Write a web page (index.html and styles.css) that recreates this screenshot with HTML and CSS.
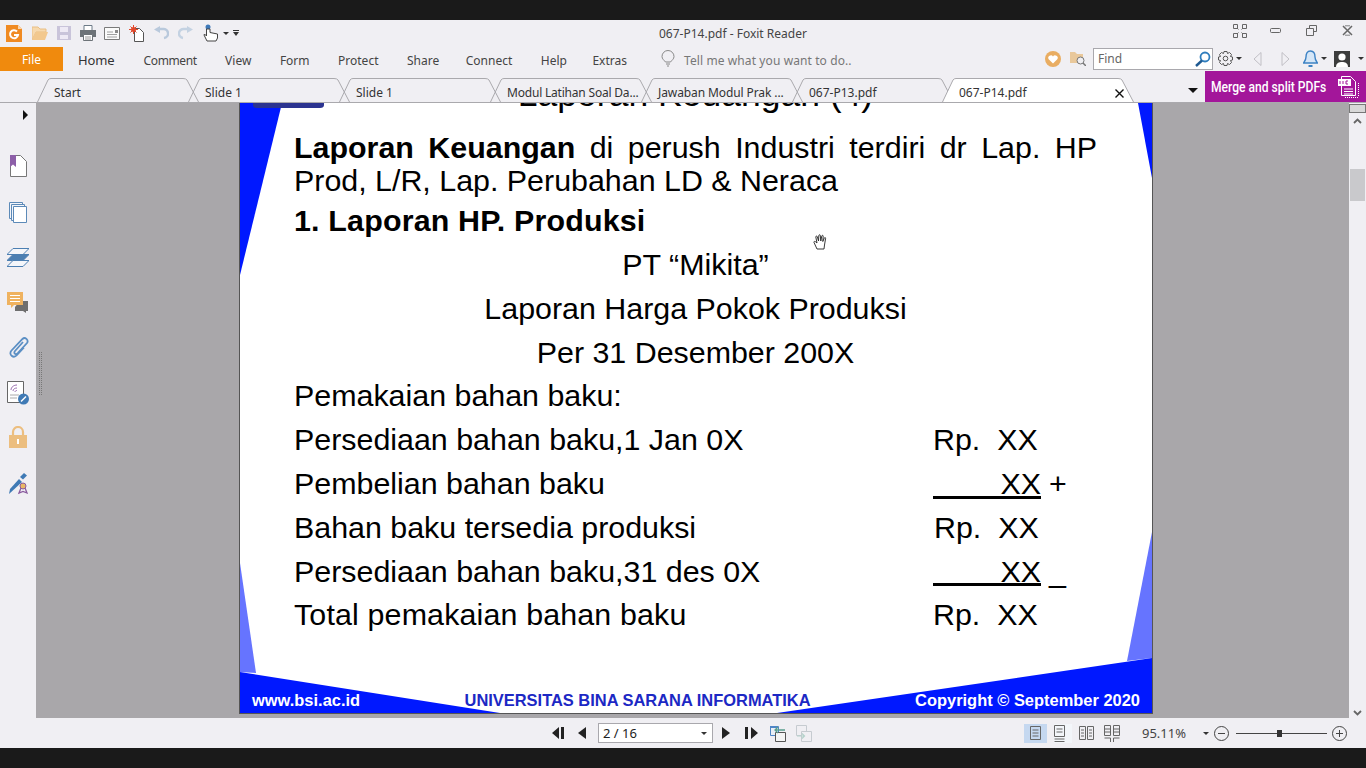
FILE: index.html
```html
<!DOCTYPE html>
<html>
<head>
  <title>067-P14.pdf - Foxit Reader</title>
  <link rel="stylesheet" href="styles.css">
</head>
<body>
<div class="app">

  <!-- quick access + title + window buttons -->
  <div class="titlebar">
    <div class="qa">
      <svg width="16" height="17" viewBox="0 0 16 17"><path d="M0 0h12l4 4v13H0z" fill="#f08a22"/><path d="M12 0l4 4h-4z" fill="#fbd7ae"/><path d="M11 6.500A4 4 0 1 0 12 10H8" fill="none" stroke="#fff" stroke-width="2"/></svg>
      <svg class="ml10" width="16" height="15" viewBox="0 0 16 15"><path d="M0 1h6l2 2h6v3H4L0 14z" fill="#f7d9ad" stroke="#e9bf85"/><path d="M4 6h12l-3 8H0z" fill="#f2c88e"/></svg>
      <svg class="ml9" width="14" height="14" viewBox="0 0 14 14"><path d="M0 0h14v14H0z" fill="#c9c4da"/><path d="M3 1h8v5H3z" fill="#eeeaf5"/><path d="M3 9h8v4H3z" fill="#eeeaf5"/></svg>
      <svg class="ml9" width="16" height="16" viewBox="0 0 16 16"><path d="M4 .5h8v5H4z" fill="#fff" stroke="#6d7b88"/><path d="M0 5h16v7H0z" fill="#6d7378"/><path d="M3.500 9.500h9v6h-9z" fill="#fff" stroke="#6d7378"/><path d="M5 12h6M5 14h6" stroke="#999"/></svg>
      <svg class="ml8" width="16" height="13" viewBox="0 0 16 13"><path d="M.5.5h15v12H.5z" fill="#fbfbfb" stroke="#7a7a7a"/><path d="M11 3h3v3h-3z" fill="#8a8a8a"/><path d="M3 5h6M3 7.500h10M3 10h10" stroke="#a0a0a0"/></svg>
      <svg class="ml9" width="15" height="17" viewBox="0 0 15 17"><path d="M5.500 3.500h5l4 4v9h-9z" fill="#fff" stroke="#555"/><circle cx="4.500" cy="4.500" r="2.500" fill="#e2472a"/><path d="M4.500 0v9M0 4.500h9M1.500 1.500l6 6M7.500 1.500l-6 6" stroke="#e2472a"/></svg>
      <svg class="ml10" width="15" height="15" viewBox="0 0 15 15"><path d="M5 3h4a4.500 4.500 0 0 1 1 9" fill="none" stroke="#b9c9dc" stroke-width="2.400"/><path d="M6 0v7L0 3.500z" fill="#b9c9dc"/></svg>
      <svg class="ml9" width="15" height="15" viewBox="0 0 15 15"><path d="M10 3H6a4.500 4.500 0 0 0-1 9" fill="none" stroke="#c4d2e2" stroke-width="2.400"/><path d="M9 0v7l6-3.500z" fill="#c4d2e2"/></svg>
      <svg class="ml10" width="16" height="18" viewBox="0 0 16 18"><circle cx="5" cy="3" r="2.500" fill="#3d78b8"/><path d="M3.500 5v7L1.500 10 1 11l3 6h9l1.500-3v-4L7 8.500V5z" fill="#fff" stroke="#444"/></svg>
      <i class="caret ml4"></i>
      <svg class="ml4" width="6" height="6" viewBox="0 0 6 6"><path d="M0 .5h6" stroke="#333"/><path d="M0 2h6L3 6z" fill="#333"/></svg>
    </div>
    <div class="doc-title">067-P14.pdf - Foxit Reader</div>
    <div class="win">
      <svg width="14" height="14" viewBox="0 0 14 14" fill="none" stroke="#666"><path d="M.5.500h4v4h-4zM9.500.5h4v4h-4zM.5 9.500h4v4h-4zM9.500 9.500h4v4h-4zM4 4l1.500 1.500M10 4L8.500 5.500M4 10l1.500-1.500M10 10L8.500 8.500"/></svg>
      <svg class="w-min" width="11" height="6" viewBox="0 0 11 6" fill="none" stroke="#666"><rect x=".5" y=".5" width="10" height="4" rx="1"/></svg>
      <svg class="w-gap" width="11" height="11" viewBox="0 0 11 11" fill="#f0eff3" stroke="#666"><path d="M3.500.5h7v6h-7z"/><path d="M.5 3.500h7v7h-7z"/></svg>
      <svg class="w-gap" width="11" height="11" viewBox="0 0 11 11" fill="none" stroke="#666" stroke-width="1.500"><path d="M1 1l9 9M10 1l-9 9"/><path d="M3 .8h5M3 10.200h5" stroke-width=".8"/></svg>
    </div>
  </div>

  <!-- ribbon menu -->
  <div class="ribbon">
    <div class="file-btn">File</div>
    <span class="menu-home">Home</span>
    <nav class="menu">
      <span class="m-comment">Comment</span><span>View</span><span>Form</span><span>Protect</span><span>Share</span><span class="m-connect">Connect</span><span>Help</span><span class="m-extras">Extras</span>
    </nav>
    <svg class="bulb" width="14" height="17" viewBox="0 0 14 17" fill="none" stroke="#888"><path d="M4.500 12C3 10 1 9 1 6.500a6 6 0 0 1 12 0C13 9 11 10 9.500 12z"/><path d="M5 14h4M6 16h2"/></svg>
    <span class="tell">Tell me what you want to do..</span>
    <div class="ribbon-right">
      <svg width="16" height="16" viewBox="0 0 16 16"><circle cx="8" cy="8" r="8" fill="#e9ad62"/><path d="M8 12.500L3.700 8.200a2.400 2.400 0 0 1 4.300-2.700 2.400 2.400 0 0 1 4.300 2.700z" fill="#fff"/></svg>
      <svg class="ml9" width="16" height="15" viewBox="0 0 16 15"><path d="M0 1h5l2 2h6v9H0z" fill="#e9c89b"/><circle cx="10.500" cy="9.500" r="3.500" fill="#f0eff3" stroke="#777"/><path d="M13 12l3 3" stroke="#777" stroke-width="1.500"/></svg>
      <div class="find"><span>Find</span>
        <svg width="16" height="16" viewBox="0 0 16 16" fill="none"><circle cx="10" cy="6" r="4.500" stroke="#2f7dbd" stroke-width="1.800"/><path d="M7 9.500L1 15" stroke="#1f5a92" stroke-width="2.400"/></svg>
      </div>
      <svg class="ml5" width="15" height="15" viewBox="0 0 15 15" fill="none" stroke="#555"><circle cx="7.500" cy="7.500" r="2.300"/><path d="M6 .5h3l.5 2 2-1 2 2-1 2 2 .5v3l-2 .5 1 2-2 2-2-1-.5 2H6l-.5-2-2 1-2-2 1-2-2-.5V6l2-.5-1-2 2-2 2 1z"/></svg>
      <i class="caret ml3"></i>
      <svg class="ml11" width="9" height="14" viewBox="0 0 9 14" fill="#f0eff3" stroke="#c0bfc4"><path d="M8 .5v13L1 7z"/></svg>
      <svg class="ml19" width="9" height="14" viewBox="0 0 9 14" fill="#f0eff3" stroke="#c0bfc4"><path d="M1 .5v13L8 7z"/></svg>
      <svg class="ml13" width="15" height="17" viewBox="0 0 15 17"><path d="M7.500 1C4 1 3 4 3 7c0 3-1 4-2.500 6h14C13 11 12 10 12 7c0-3-1-6-4.500-6z" fill="#d5e6f7" stroke="#3c82c4" stroke-width="1.400"/><path d="M5.500 15h4v2h-4z" fill="#3c82c4"/></svg>
      <i class="caret ml3"></i>
      <svg class="ml7" width="16" height="16" viewBox="0 0 16 16"><path d="M0 0h16v16H0z" fill="#3c3c3c"/><circle cx="8" cy="6" r="3.600" fill="#fff"/><path d="M2 16c0-4 3-5 6-5s6 1 6 5z" fill="#fff"/></svg>
      <i class="caret ml8"></i>
    </div>
  </div>

  <!-- document tabs -->
  <div class="tabbar">
    <div class="tab"><svg class="tab-shape" width="162" height="24" viewBox="0 0 162 24"><path d="M.5 24L11 2Q12 .5 14 .5H146Q149 .5 150 2L161.500 24"/></svg><span>Start</span></div>
    <div class="tab"><svg class="tab-shape" width="162" height="24" viewBox="0 0 162 24"><path d="M.5 24L11 2Q12 .5 14 .5H146Q149 .5 150 2L161.500 24"/></svg><span>Slide 1</span></div>
    <div class="tab"><svg class="tab-shape" width="162" height="24" viewBox="0 0 162 24"><path d="M.5 24L11 2Q12 .5 14 .5H146Q149 .5 150 2L161.500 24"/></svg><span>Slide 1</span></div>
    <div class="tab"><svg class="tab-shape" width="162" height="24" viewBox="0 0 162 24"><path d="M.5 24L11 2Q12 .5 14 .5H146Q149 .5 150 2L161.500 24"/></svg><span class="tab-tight">Modul Latihan Soal Da...</span></div>
    <div class="tab"><svg class="tab-shape" width="162" height="24" viewBox="0 0 162 24"><path d="M.5 24L11 2Q12 .5 14 .5H146Q149 .5 150 2L161.500 24"/></svg><span class="tab-tight2">Jawaban Modul Prak ...</span></div>
    <div class="tab"><svg class="tab-shape" width="162" height="24" viewBox="0 0 162 24"><path d="M.5 24L11 2Q12 .5 14 .5H146Q149 .5 150 2L161.500 24"/></svg><span>067-P13.pdf</span></div>
    <div class="tab tab-on"><svg class="tab-shape" width="192" height="24" viewBox="0 0 192 24"><path class="on" d="M.5 24L11 2Q12 .5 14 .5H176Q179 .5 180 2L191.500 24"/></svg><span>067-P14.pdf</span>
      <svg class="tab-x" width="9" height="9" viewBox="0 0 9 9"><path d="M.5.5l8 8M8.500.5l-8 8" stroke="#111" stroke-width="1.400"/></svg>
    </div>
    <i class="tab-more"></i>
    <div class="ad"><span class="ad-text">Merge and split PDFs</span>
      <svg width="24" height="24" viewBox="0 0 24 24" fill="none" stroke="#fff"><path d="M4.500 1.500h9l5 5v14h-14z"/><path d="M1 4h13v7H1z" fill="#fff" stroke="none"/><path d="M3 6v3M6 6v3M9 6v3h2M9 6h2" stroke="#a3169a"/><path d="M7 14h9M7 16.500h9M7 19h9"/><path d="M8 22.500h14M21.500 8v14" stroke-dasharray="1 1"/></svg>
    </div>
  </div>

  <div class="main">
    <!-- left panel icons -->
    <aside class="side">
      <i class="side-arrow"></i>
      <svg class="s1" width="17" height="22" viewBox="0 0 17 22"><path d="M.5.5h10l6 6v15H.5z" fill="#fff" stroke="#777"/><path d="M0 0h6v12L3 9.500 0 12z" fill="#8d5fa8"/></svg>
      <svg class="s2" width="18" height="21" viewBox="0 0 18 21" fill="#f4f6fa" stroke="#5c8ab8"><path d="M.5.5h13v16H.5z"/><path d="M2.500 2.500h13v16h-13z"/><path d="M4.500 4.500h13v16h-13z" fill="#fff"/></svg>
      <svg class="s3" width="22" height="19" viewBox="0 0 22 19" stroke="#4c7fb2"><path d="M6 .5h16l-6 6H0z" fill="#f4f6fa"/><path d="M6 6.500h16l-6 6H0z" fill="#4c7fb2"/><path d="M6 12.500h16l-6 6H0z" fill="#f4f6fa"/></svg>
      <svg class="s4" width="21" height="21" viewBox="0 0 21 21"><path d="M13 9h8v10h-2v2l-3-2H8v-4z" fill="#6e6e6e"/><path d="M0 0h16v13H7l-3 3v-3H0z" fill="#efb25f"/><path d="M3 3.500h10M3 6.500h10M3 9.500h10" stroke="#fff"/></svg>
      <svg class="s5" width="20" height="21" viewBox="0 0 20 21" fill="none" stroke="#5b8fc4" stroke-width="1.800"><path d="M14 5l-8 9c-2 2.500 1 4 2.800 2.200L18 6c2-3-2-6.500-4.500-4L2.500 13.500c-3.500 4 2 8.500 5.500 4.500l7-7.500"/></svg>
      <svg class="s6" width="22" height="24" viewBox="0 0 22 24"><path d="M.5.5h16v21H.5z" fill="#fff" stroke="#666"/><path d="M4 9c0-3 3-5 6-5M6 10c0-2 2-3 4-3M8 11c0-1 1-1.500 2-1.500" fill="none" stroke="#9a6db0"/><path d="M3 14h9M3 17h7" stroke="#aaa"/><circle cx="16.500" cy="18" r="5.500" fill="#3f7ab5"/><path d="M14 20.500l5-5" stroke="#fff" stroke-width="1.500"/></svg>
      <svg class="s7" width="18" height="22" viewBox="0 0 18 22"><path d="M4 10V6a5 5 0 0 1 10 0v4" fill="none" stroke="#ecbe7f" stroke-width="2.200"/><path d="M0 9h18v13H0z" fill="#ecbe7f"/><path d="M8 13h2v5H8z" fill="#fff"/></svg>
      <svg class="s8" width="20" height="22" viewBox="0 0 20 22"><path d="M1 21l1-5L11 6l3 3z" fill="#3f7ab5"/><path d="M12 4l4-4 3 2.500-4 4z" fill="#3f7ab5"/><path d="M11 20l2-5h4l2 5-4-1.500z" fill="none" stroke="#8a5b9e" stroke-width="1.300"/><circle cx="15" cy="13" r="3" fill="#e8b765" stroke="#8a5b9e"/></svg>
    </aside>

    <div class="viewer">
      <i class="grip"></i>
      <section class="page">
        <svg class="page-bg" width="912" height="610" viewBox="0 0 912 610">
          <path d="M0 0H42L0 172z" fill="#0018ff"/>
          <path d="M898 0H912V75z" fill="#0018ff"/>
          <path d="M0 460L16 570 0 569z" fill="#6674ff"/>
          <path d="M912 429L887 558 912 555z" fill="#6674ff"/>
          <path d="M0 569L260 610H0z" fill="#0018ff"/>
          <path d="M912 555V610H537z" fill="#0018ff"/>
          <path d="M13 0H84V2Q84 5 80 5H17Q13 5 13 2z" fill="#2b3390"/>
        </svg>
        <h1 class="slide-title">Laporan Keuangan (4)</h1>
        <p class="lead"><b>Laporan Keuangan</b> di perush Industri terdiri dr Lap. HP Prod, L/R, Lap. Perubahan LD &amp; Neraca</p>
        <div class="line"><b class="wide">1. Laporan HP. Produksi</b></div>
        <div class="line center">PT “Mikita”</div>
        <div class="line center">Laporan Harga Pokok Produksi</div>
        <div class="line center">Per 31 Desember 200X</div>
        <div class="line up">Pemakaian bahan baku:</div>
        <div class="line row"><span class="lbl">Persediaan bahan baku,1 Jan 0X</span><span class="amt">Rp.  XX</span></div>
        <div class="line row"><span class="lbl">Pembelian bahan baku</span><span class="amt-u amt-u1">XX</span><span class="op">+</span></div>
        <div class="line row"><span class="lbl">Bahan baku tersedia produksi</span><span class="amt amt-shift">Rp.  XX</span></div>
        <div class="line row"><span class="lbl">Persediaan bahan baku,31 des 0X</span><span class="amt-u">XX</span><span class="op">_</span></div>
        <div class="line row up"><span class="lbl total">Total pemakaian bahan baku</span><span class="amt">Rp.  XX</span></div>
        <footer class="page-foot">
          <span>www.bsi.ac.id</span>
          <span class="foot-mid">UNIVERSITAS BINA SARANA INFORMATIKA</span>
          <span>Copyright © September 2020</span>
        </footer>
      </section>
      <svg class="hand" width="16" height="16" viewBox="0 0 16 16"><path d="M4 15L1 8.500c-.5-1 .8-1.500 1.500-.8L4 9 2.800 3c-.2-1 1.200-1.300 1.500-.3L5.500 7 5.800 1.500c.1-1 1.500-1 1.500 0L7.800 7l1-5c.2-1 1.500-.8 1.400.2L9.800 7.500l1.500-3.500c.4-.9 1.600-.4 1.300.5L11.500 11 11 15z" fill="#fff" stroke="#222" stroke-width=".9"/></svg>
    </div>

    <div class="vscroll">
      <i class="vs-top"></i>
      <svg class="vs-up" width="9" height="6" viewBox="0 0 9 6" fill="none" stroke="#666" stroke-width="1.800"><path d="M1 5l3.500-3.500L8 5"/></svg>
      <i class="vs-thumb"></i>
      <svg class="vs-down" width="9" height="6" viewBox="0 0 9 6" fill="none" stroke="#666" stroke-width="1.800"><path d="M1 1l3.500 3.500L8 1"/></svg>
    </div>
  </div>

  <!-- status bar -->
  <div class="status">
    <div class="nav">
      <svg width="14" height="14" viewBox="0 0 14 14" fill="#222"><path d="M7 1v12L0 7zM9 1h3v12H9z"/></svg>
      <svg class="ml12" width="9" height="14" viewBox="0 0 9 14" fill="#222"><path d="M8 1v12L0 7z"/></svg>
      <div class="pagebox"><span>2 / 16</span><i class="caret-s"></i></div>
      <svg class="ml8" width="9" height="14" viewBox="0 0 9 14" fill="#222"><path d="M1 1v12l8-6z"/></svg>
      <svg class="ml15" width="13" height="14" viewBox="0 0 13 14" fill="#222"><path d="M3 1H0v12h3zM6 1v12l7-6z"/></svg>
      <svg class="ml12" width="16" height="17" viewBox="0 0 16 17" fill="none"><path d="M.5 1.500h8v9h-8z" fill="#e9eef5" stroke="#4f86c6"/><path d="M0 1h8v2H0z" fill="#4f86c6"/><path d="M5.500 7.500h10v9h-10z" fill="#f4f4f4" stroke="#555"/><path d="M5 5h10M8 2L5 5l3 3" stroke="#5a9e8f" stroke-width="1.300"/></svg>
      <svg class="ml10" width="16" height="17" viewBox="0 0 16 17" fill="none" stroke="#c6cbd0"><path d="M.5.500h10v10H.5z"/><path d="M5.500 6.500h10v10h-10z" fill="#f0eff3"/><path d="M1 11h7M6 8.500L8.500 11 6 13.500" stroke="#b5d2cb" stroke-width="1.200"/></svg>
    </div>
    <div class="view">
      <div class="view-on"><svg width="11" height="14" viewBox="0 0 11 14" fill="none" stroke="#666"><path d="M.5.500h10v13H.5zM2.500 4h6M2.500 7h6M2.500 10h6"/></svg></div>
      <div class="view-hover"><svg width="11" height="17" viewBox="0 0 11 17" fill="none" stroke="#666"><path d="M.5.500h10v11H.5zM.5 14h10M.5 16.500h10M2.500 4h6M2.500 7h6"/></svg></div>
      <svg class="ml7" width="15" height="14" viewBox="0 0 15 14" fill="none" stroke="#666"><path d="M.5.500h6v13h-6zM8.500.500h6v13h-6zM2 4h3M2 7h3M2 10h3M10 4h3M10 7h3M10 10h3"/></svg>
      <svg class="ml10" width="16" height="17" viewBox="0 0 16 17" fill="none" stroke="#666"><path d="M.5.500h6v10h-6zM9.500.500h6v10h-6zM.5 13h6v4M9.500 17v-4h6M.5 4h6M.5 7h6M9.500 4h6M9.500 7h6"/></svg>
      <span class="zoom">95.11%</span>
      <i class="caret-s ml17"></i>
      <svg class="ml5" width="15" height="15" viewBox="0 0 15 15" fill="none" stroke="#444"><circle cx="7.500" cy="7.500" r="7"/><path d="M4 7.500h7"/></svg>
      <div class="slider"><i></i></div>
      <svg width="15" height="15" viewBox="0 0 15 15" fill="none" stroke="#444"><circle cx="7.500" cy="7.500" r="7"/><path d="M4 7.500h7M7.500 4v7"/></svg>
    </div>
  </div>
</div>
</body>
</html>
```

FILE: styles.css
```css
html, body {
  margin: 0;
  height: 768px;
  overflow: hidden;
}
body {
  background-color: #1a1a1a;
  font-family: "Noto Sans", sans-serif;
  font-size: 12px;
  color: #333;
}
svg { display: block; flex: none; }
i { display: block; flex: none; }

.app {
  margin-top: 20px;
  height: 728px;
  background-color: #f0eff3;
  display: flex;
  flex-direction: column;
}

.ml3 { margin-left: 3px; }
.ml4 { margin-left: 4px; }
.ml5 { margin-left: 5px; }
.ml7 { margin-left: 7px; }
.ml8 { margin-left: 8px; }
.ml9 { margin-left: 9px; }
.ml10 { margin-left: 10px; }
.ml11 { margin-left: 11px; }
.ml12 { margin-left: 12px; }
.ml13 { margin-left: 13px; }
.ml15 { margin-left: 15px; }
.ml17 { margin-left: 17px; }
.ml19 { margin-left: 19px; }

.caret {
  width: 0;
  height: 0;
  border-left: 3px solid transparent;
  border-right: 3px solid transparent;
  border-top: 3px solid #333;
}
.caret-s {
  width: 0;
  height: 0;
  border-left: 3px solid transparent;
  border-right: 3px solid transparent;
  border-top: 3px solid #333;
}

/* title row */
.titlebar {
  height: 26px;
  display: flex;
  align-items: center;
}
.qa {
  display: flex;
  align-items: center;
  padding-left: 6px;
  width: 659px;
  box-sizing: border-box;
}
.doc-title {
  width: 200px;
  color: #444;
}
.win {
  margin-left: auto;
  display: flex;
  align-items: center;
  padding-right: 13px;
  margin-top: -5px;
}
.w-min { margin-left: 23px; }
.w-gap { margin-left: 25px; }

/* ribbon */
.ribbon {
  height: 25px;
  display: flex;
  align-items: center;
}
.file-btn {
  width: 63px;
  height: 24px;
  margin-top: 1px;
  line-height: 26px;
  background-color: #f08a0d;
  color: #fff;
  text-align: center;
}
.menu-home {
  margin: 2px 0 0 15px;
  font-size: 13px;
  letter-spacing: -.1px;
  color: #333;
}
.menu {
  display: flex;
  gap: 28.5px;
  margin: 3px 0 0 29px;
  color: #444;
}
.m-comment { letter-spacing: -.4px; }
.m-connect { margin-left: -2px; }
.m-extras { margin-left: -3px; }
.bulb { margin-left: 34px; }
.tell {
  margin: 3px 0 0 9px;
  letter-spacing: .1px;
  color: #777;
}
.ribbon-right {
  margin-left: auto;
  display: flex;
  align-items: center;
  padding-right: 2px;
}
.find {
  width: 120px;
  height: 22px;
  margin-left: 7px;
  box-sizing: border-box;
  border: 1px solid #a9a8ad;
  background-color: #fff;
  display: flex;
  align-items: center;
  justify-content: space-between;
  padding: 0 1px 0 4px;
  color: #666;
}

/* tabs */
.tabbar {
  height: 32px;
  box-sizing: border-box;
  border-bottom: 1px solid #aaa9ad;
  display: flex;
  padding-left: 37px;
}
.tab {
  width: 151px;
  height: 24px;
  margin-top: 7px;
  position: relative;
  flex: none;
  line-height: 29px;
  color: #333;
}
.tab span {
  position: relative;
  display: block;
  padding-left: 17px;
  white-space: nowrap;
}
.tab span.tab-tight { letter-spacing: -.2px; }
.tab span.tab-tight2 { letter-spacing: -.1px; }
.tab-shape {
  position: absolute;
  left: 0;
  top: 0;
  fill: none;
  stroke: #aaa9ad;
}
.tab-on {
  width: 192px;
  margin-left: -1px;
}
.tab-on .tab-shape path { fill: #fff; }
.tab-x {
  position: absolute;
  left: 173px;
  top: 11px;
}
.tab-more {
  width: 0;
  height: 0;
  margin: 17px 0 0 54px;
  border-left: 5px solid transparent;
  border-right: 5px solid transparent;
  border-top: 5px solid #111;
}
.ad {
  margin-left: auto;
  width: 161px;
  height: 31px;
  background-color: #a3169a;
  display: flex;
  align-items: center;
  color: #fff;
}
.ad-text {
  font-family: "Roboto", sans-serif;
  font-weight: 500;
  font-size: 15.5px;
  width: 132px;
  padding-left: 6px;
  box-sizing: border-box;
  white-space: nowrap;
  transform: scaleX(.78);
  transform-origin: 6px 50%;
}

/* main area */
.main {
  height: 615px;
  display: flex;
}
.side {
  width: 36px;
  flex: none;
  display: flex;
  flex-direction: column;
}
.side-arrow {
  width: 0;
  height: 0;
  margin: 7px 0 0 23px;
  border-top: 5px solid transparent;
  border-bottom: 5px solid transparent;
  border-left: 5px solid #111;
}
.s1 { margin: 35px 0 0 10px; }
.s2 { margin: 25px 0 0 9px; }
.s3 { margin: 25px 0 0 7px; }
.s4 { margin: 25px 0 0 7px; }
.s5 { margin: 24px 0 0 9px; }
.s6 { margin: 23px 0 0 7px; }
.s7 { margin: 21px 0 0 9px; }
.s8 { margin: 25px 0 0 8px; }

.viewer {
  flex: 1;
  background-color: #a9a7aa;
  position: relative;
  overflow: hidden;
}
.grip {
  position: absolute;
  left: 3px;
  top: 249px;
  width: 1px;
  height: 43px;
  border-left: 1px dotted #777;
  border-right: 1px dotted #777;
}
.hand {
  position: absolute;
  left: 777px;
  top: 131px;
}

/* the pdf page */
.page {
  width: 914px;
  height: 611px;
  margin-left: 203px;
  box-sizing: border-box;
  border: 1px solid #555;
  border-top: 0;
  background-color: #fff;
  padding: 0 55px 0 54px;
  position: relative;
  overflow: hidden;
  display: flex;
  flex-direction: column;
  color: #000;
  font-family: "Liberation Sans", Arial, sans-serif;
  font-size: 30.4px;
}
.page-bg {
  position: absolute;
  left: 0;
  top: 0;
}
.slide-title {
  position: relative;
  margin: -29px 0 0;
  height: 40px;
  line-height: 40px;
  font-size: 35.5px;
  font-weight: normal;
  text-align: center;
}
.lead {
  position: relative;
  margin: 17px 0 1px;
  line-height: 33px;
  text-align: justify;
}
.line {
  position: relative;
  height: 44px;
  line-height: 44px;
  white-space: nowrap;
}
.up { margin-top: -1px; }
.wide { letter-spacing: .18px; }
.center { text-align: center; }
.row { display: flex; }
.lbl { width: 639px; flex: none; }
.total { letter-spacing: .15px; }
.amt { white-space: pre; }
.amt-shift { margin-left: 1px; }
.amt-u {
  width: 108px;
  height: 36px;
  margin-top: 1px;
  line-height: 42px;
  box-sizing: border-box;
  border-bottom: 3px solid #000;
  text-align: right;
}
.amt-u1 { height: 37px; }
.op { margin-left: 8px; }
.page-foot {
  position: relative;
  margin: auto -43px 0 -42px;
  height: 27px;
  display: flex;
  justify-content: space-between;
  color: #fff;
  font-size: 16.45px;
  font-weight: bold;
  line-height: 28px;
}
.foot-mid { color: #1c28c4; }

/* scrollbar */
.vscroll {
  width: 17px;
  flex: none;
  display: flex;
  flex-direction: column;
  align-items: center;
}
.vs-top {
  width: 15px;
  height: 7px;
  margin-top: 1px;
  border: 1px solid #777;
  background-color: #d8d8d8;
}
.vs-up { margin-top: 5px; }
.vs-thumb {
  width: 15px;
  height: 32px;
  margin-top: 45px;
  background-color: #c9c9cc;
}
.vs-down { margin-top: auto; margin-bottom: 2px; }

/* status bar */
.status {
  height: 30px;
  display: flex;
  align-items: center;
}
.nav {
  display: flex;
  align-items: center;
  margin-left: 552px;
}
.pagebox {
  width: 115px;
  height: 20px;
  margin-left: 11px;
  box-sizing: border-box;
  border: 1px solid #a9a8ad;
  background-color: #fff;
  display: flex;
  align-items: center;
  justify-content: space-between;
  padding: 0 5px 0 4px;
  color: #222;
  font-size: 13px;
}
.view {
  margin-left: auto;
  padding-right: 19px;
  display: flex;
  align-items: center;
}
.view-on {
  width: 23px;
  height: 19px;
  background-color: #c5d8f0;
  display: flex;
  align-items: center;
  justify-content: center;
}
.view-hover {
  width: 18px;
  height: 19px;
  margin-left: 7px;
  background-color: #f3f6fa;
  display: flex;
  align-items: center;
}
.zoom {
  margin-left: 22px;
  color: #444;
  font-size: 13px;
}
.slider {
  width: 91px;
  height: 1px;
  margin: 0 5px 0 7px;
  background-color: #444;
  position: relative;
}
.slider i {
  position: absolute;
  left: 41px;
  top: -3px;
  width: 5px;
  height: 7px;
  background-color: #333;
}
```
